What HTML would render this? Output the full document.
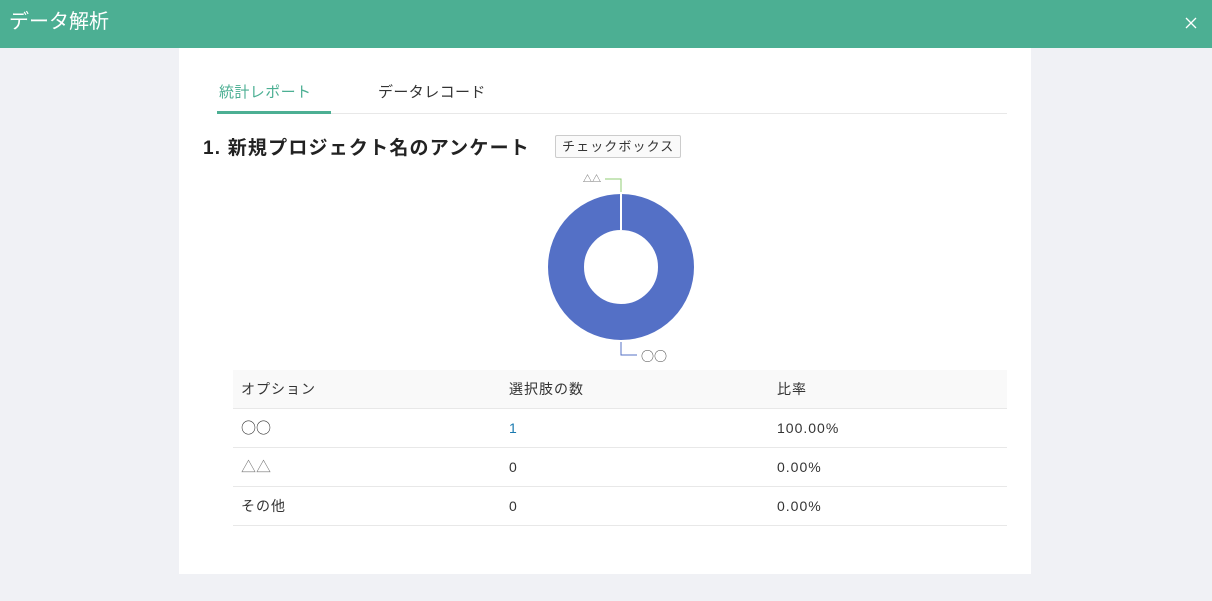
<!DOCTYPE html>
<html><head><meta charset="utf-8"><style>
*{margin:0;padding:0;box-sizing:border-box}
body{width:1212px;height:601px;background:#f0f1f5;font-family:"Liberation Sans","Noto Sans CJK JP",sans-serif;position:relative;overflow:hidden;color:#333}
.hdr{position:absolute;left:0;top:0;width:1212px;height:48px;background:#4caf93;color:#fff;font-size:20px;line-height:44px;padding-left:9px}
.x{position:absolute;left:1184px;top:16px}
.card{position:absolute;left:179px;top:48px;width:852px;height:526px;background:#fff}
.tabs{position:absolute;left:38px;top:0;width:790px;height:66px;border-bottom:1px solid #e8e8e8}
.tab{position:absolute;top:33px;font-size:15px;color:#333;letter-spacing:0.4px}
.t1{left:0;width:114px;height:33px;color:#4caf93;padding-left:2px;border-bottom:3px solid #4caf93}
.t2{left:161px}
.q{position:absolute;left:24px;top:85px;font-size:19px;font-weight:bold;color:#222;letter-spacing:1.2px}
.tag{position:absolute;left:376px;top:87px;height:23px;padding:0 6px;border:1px solid #ccc;border-radius:2px;background:#fafafa;font-size:13px;line-height:21px;color:#333;letter-spacing:1.1px}
table{position:absolute;left:54px;top:322px;width:774px;border-collapse:collapse;font-size:14px}
td{height:39px;border-bottom:1px solid #e8e8e8;padding-left:8px;letter-spacing:1px}
tr.h td{background:#f9f9f9;height:38px}
.c{font-family:"Noto Sans CJK JP",sans-serif;font-size:15px;letter-spacing:0}
</style></head><body>
<div class="hdr">データ解析</div>
<svg class="x" width="14" height="14" viewBox="0 0 14 14"><path d="M2 2L12 12M12 2L2 12" stroke="#fff" stroke-width="1.3"/></svg>
<div class="card">
<div class="tabs"><div class="tab t1">統計レポート</div><div class="tab t2">データレコード</div></div>
<div class="q">1. 新規プロジェクト名のアンケート</div>
<div class="tag">チェックボックス</div>
<svg style="position:absolute;left:0;top:0" width="852" height="320">
<circle cx="442" cy="219" r="55" fill="none" stroke="#5470c6" stroke-width="36"/>
<line x1="442" y1="146" x2="442" y2="182" stroke="#fff" stroke-width="2"/>
<path d="M426 131H442V144" fill="none" stroke="#91cc75" stroke-width="1"/>
<text x="404" y="134" font-size="9" fill="#555">△△</text>
<path d="M442 294V307H458" fill="none" stroke="#5470c6" stroke-width="1"/>
<text x="462" y="313" font-size="13" fill="#444" font-family="Noto Sans CJK JP">○○</text>
</svg>
<table>
<tr class="h"><td style="width:268px">オプション</td><td style="width:268px">選択肢の数</td><td>比率</td></tr>
<tr><td class="c">○○</td><td style="color:#1a7ab0">1</td><td>100.00%</td></tr>
<tr><td class="c" style="color:#777">△△</td><td>0</td><td>0.00%</td></tr>
<tr><td>その他</td><td>0</td><td>0.00%</td></tr>
</table>
</div>
</body></html>
